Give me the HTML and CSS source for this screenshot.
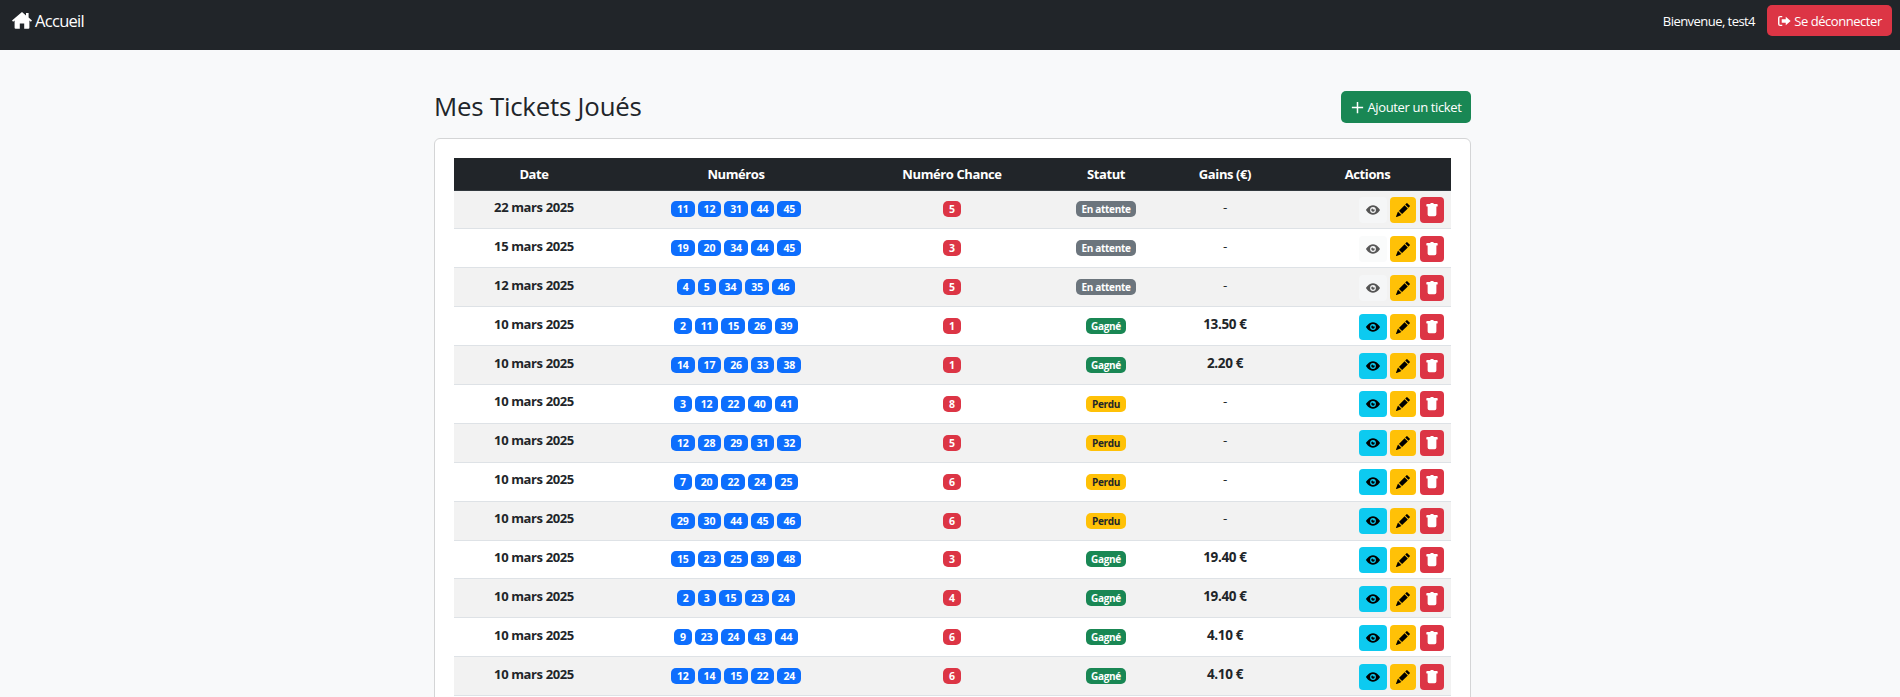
FILE: index.html
```html
<!DOCTYPE html>
<html lang="fr">
<head>
<meta charset="utf-8">
<title>Mes Tickets Joués</title>
<link rel="stylesheet" href="styles.css">
</head>
<body>
<svg class="defs" aria-hidden="true">
  <symbol id="i-eyef" viewBox="0 0 16 16"><path fill-rule="evenodd" d="M0 8s3-5.500 8-5.500S16 8 16 8s-3 5.500-8 5.500S0 8 0 8zm8 3.300a3.300 3.300 0 1 0 0-6.600 3.300 3.300 0 0 0 0 6.600z"/><path d="M10 8a2 2 0 1 1-2.500-1.900c-.1.800.5 1.900 1.600.9.500.2.900.5.900 1z"/></symbol>
  <symbol id="i-pencil" viewBox="0 0 16 16"><path d="M12.854.146a.5.5 0 0 0-.707 0L10.500 1.793 14.207 5.500l1.647-1.646a.5.5 0 0 0 0-.708l-3-3zm.646 6.061L9.793 2.500 3.293 9H3.500a.5.5 0 0 1 .5.5v.5h.5a.5.5 0 0 1 .5.5v.5h.5a.5.5 0 0 1 .5.5v.5h.5a.5.5 0 0 1 .5.5v.207l6.500-6.500zm-7.468 7.468A.5.5 0 0 1 6 13.500V13h-.5a.5.5 0 0 1-.5-.5V12h-.5a.5.5 0 0 1-.5-.5V11h-.5a.5.5 0 0 1-.5-.5V10h-.5a.499.499 0 0 1-.175-.032l-.179.178a.5.5 0 0 0-.11.168l-2 5a.5.5 0 0 0 .65.650l5-2a.5.5 0 0 0 .168-.110l.178-.178z"/></symbol>
  <symbol id="i-trash" viewBox="0 0 16 16"><path d="M2.500 1a1 1 0 0 0-1 1v1a1 1 0 0 0 1 1H3v9a2 2 0 0 0 2 2h6a2 2 0 0 0 2-2V4h.500a1 1 0 0 0 1-1V2a1 1 0 0 0-1-1H10a1 1 0 0 0-1-1H7a1 1 0 0 0-1 1H2.500z"/></symbol>
</svg>

<nav class="topbar">
  <a class="brand" href="#"><svg class="home" viewBox="0 0 20 17"><path d="M10 0 0 8.500l1.100 1.300L2.600 8.600v7.200a1 1 0 0 0 1 1h4.200v-5.300h4.400v5.300h4.200a1 1 0 0 0 1-1V8.600l1.500 1.200L20 8.500l-3.400-2.900V1h-2.600v2.400L10 0z"/></svg>Accueil</a>
  <div class="user">
    <span class="welcome">Bienvenue, test4</span>
    <a class="btn btn-logout" href="#"><svg class="ic" viewBox="0 0 16 16" fill="currentColor"><path d="M6 2.200H3.500A2.300 2.300 0 0 0 1.200 4.500v7a2.300 2.300 0 0 0 2.300 2.300H6v-1.600H3.500a.7.7 0 0 1-.7-.7v-7a.7.7 0 0 1 .7-.7H6V2.200z"/><path d="M10 3.200 15.600 8 10 12.800V10H5.400V6H10V3.200z"/></svg>Se déconnecter</a>
  </div>
</nav>

<main class="page">
  <header class="page-head">
    <h1>Mes Tickets Joués</h1>
    <a class="btn btn-add" href="#"><svg class="plus" viewBox="0 0 16 16" fill="currentColor"><path d="M7.200 2h1.600v5.200H14v1.600H8.800V14H7.200V8.800H2V7.200h5.200V2z"/></svg>Ajouter un ticket</a>
  </header>
  <section class="card">
    <table>
      <colgroup><col class="c1"><col class="c2"><col class="c3"><col class="c4"><col class="c5"><col class="c6"></colgroup>
      <thead><tr><th>Date</th><th>Numéros</th><th>Numéro Chance</th><th>Statut</th><th>Gains (€)</th><th>Actions</th></tr></thead>
      <tbody id="rows"></tbody>
    </table>
  </section>
</main>
<script src="app.js"></script>
</body>
</html>
```

FILE: styles.css
```css
* { box-sizing: border-box; }
html, body { height: 100%; }
body { margin: 0; height: 697px; overflow: hidden; background: #f8f9fa; color: #212529; font-family: "Open Sans", "Noto Sans", sans-serif; font-size: 14px; }
a { text-decoration: none; }
.defs { display: none; }
.topbar { height: 50px; background: #212529; display: flex; align-items: flex-start; justify-content: space-between; padding: 5px 8px 0 12px; }
.brand { color: #fff; font-size: 16.500px; height: 31px; display: flex; align-items: center; letter-spacing: -.7px; }
.home { width: 20px; height: 17px; margin-right: 3px; fill: #fff; }
.user { display: flex; align-items: center; gap: 12px; }
.welcome { color: #fff; font-size: 13px; letter-spacing: -.55px; }
.btn { display: inline-flex; align-items: center; justify-content: center; color: #fff; border-radius: 5px; font-size: 13px; letter-spacing: -.45px; }
.btn-logout { background: #dc3545; height: 31px; width: 125px; }
.ic { width: 14px; height: 14px; margin-right: 3px; }
.page { margin-left: 434px; width: 1037px; padding-top: 41px; }
.page-head { display: flex; align-items: flex-start; justify-content: space-between; height: 32px; margin-bottom: 15px; }
h1 { margin: -2px 0 0; font-size: 25.800px; line-height: 34px; font-weight: 500; letter-spacing: -.2px; }
.btn-add { background: #198754; height: 32px; width: 130px; letter-spacing: -.35px; }
.plus { width: 15px; height: 15px; margin-right: 2px; }
.card { background: #fff; border: 1px solid #d4d5d6; border-radius: 6px; padding: 19px; height: 700px; }
table { width: 997px; table-layout: fixed; border-collapse: collapse; }
.c1 { width: 160px; } .c2 { width: 244px; } .c3 { width: 188px; } .c4 { width: 120px; } .c5 { width: 118px; } .c6 { width: 167px; }
th { background: #212529; color: #fff; height: 32px; font-size: 13px; font-weight: 700; text-align: center; letter-spacing: -.4px; padding: 0; border-bottom: 1px solid #32383e; }
td { height: 38.900px; padding: 0 8px 5px; text-align: center; border-bottom: 1px solid #dee2e6; font-size: 13px; font-weight: 700; letter-spacing: -.38px; }
tbody tr:nth-child(odd) td { background: #f2f2f2; }
.gain { font-size: 13.500px; letter-spacing: -.35px; }
.dash { font-weight: 400; }
.badge { display: inline-block; height: 16px; line-height: 16px; border-radius: 5px; color: #fff; font-size: 10.500px; font-weight: 700; padding: 0 6px; letter-spacing: -.2px; margin: 1px 1.500px 0; vertical-align: top; }
.num-cell { padding-bottom: 0; }
.act-cell { padding: 1px 7px 0 0; }
.num { background: #0d6efd; min-width: 18px; }
.chance { background: #dc3545; padding: 0 5px; min-width: 18px; }
.status { font-size: 10px; letter-spacing: -.3px; padding: 0 5px; }
.grey { background: #6c757d; }
.green { background: #198754; }
.yellow { background: #ffc107; color: #212529; padding: 0 6px; }
.acts { display: flex; justify-content: flex-end; gap: 3px; }
.act { height: 26px; width: 26px; border-radius: 4px; display: flex; align-items: center; justify-content: center; }
.act svg { width: 14px; height: 14px; }
.view { width: 28px; background: #0dcaf0; color: #000; }
.view.off { background: #f8f9fa; color: #000; opacity: .65; }
.edit { background: #ffc107; color: #000; margin-right: 1px; }
.del { width: 24px; background: #dc3545; color: #fff; }
```

FILE: app.js
```js
var data = [
 ["22 mars 2025",[11,12,31,44,45],5,"a","-"],
 ["15 mars 2025",[19,20,34,44,45],3,"a","-"],
 ["12 mars 2025",[4,5,34,35,46],5,"a","-"],
 ["10 mars 2025",[2,11,15,26,39],1,"g","13.50 €"],
 ["10 mars 2025",[14,17,26,33,38],1,"g","2.20 €"],
 ["10 mars 2025",[3,12,22,40,41],8,"p","-"],
 ["10 mars 2025",[12,28,29,31,32],5,"p","-"],
 ["10 mars 2025",[7,20,22,24,25],6,"p","-"],
 ["10 mars 2025",[29,30,44,45,46],6,"p","-"],
 ["10 mars 2025",[15,23,25,39,48],3,"g","19.40 €"],
 ["10 mars 2025",[2,3,15,23,24],4,"g","19.40 €"],
 ["10 mars 2025",[9,23,24,43,44],6,"g","4.10 €"],
 ["10 mars 2025",[12,14,15,22,24],6,"g","4.10 €"]
];
var st = {a:["grey","En attente"],g:["green","Gagné"],p:["yellow","Perdu"]};
function ic(n){return '<svg fill="currentColor"><use href="#i-'+n+'"/></svg>';}
document.getElementById("rows").innerHTML = data.map(function(r){
  return '<tr><td>'+r[0]+'</td><td class="num-cell">'+r[1].map(function(n){return '<span class="badge num">'+n+'</span>';}).join("")+
  '</td><td class="num-cell"><span class="badge chance">'+r[2]+'</span></td><td class="num-cell"><span class="badge status '+st[r[3]][0]+'">'+st[r[3]][1]+
  '</span></td><td class="gain'+(r[4]=="-"?" dash":"")+'">'+r[4]+'</td><td class="act-cell"><div class="acts"><a class="act view'+(r[3]=="a"?" off":"")+'">'+ic("eyef")+'</a><a class="act edit">'+ic("pencil")+'</a><a class="act del">'+ic("trash")+'</a></div></td></tr>';
}).join("");
```
